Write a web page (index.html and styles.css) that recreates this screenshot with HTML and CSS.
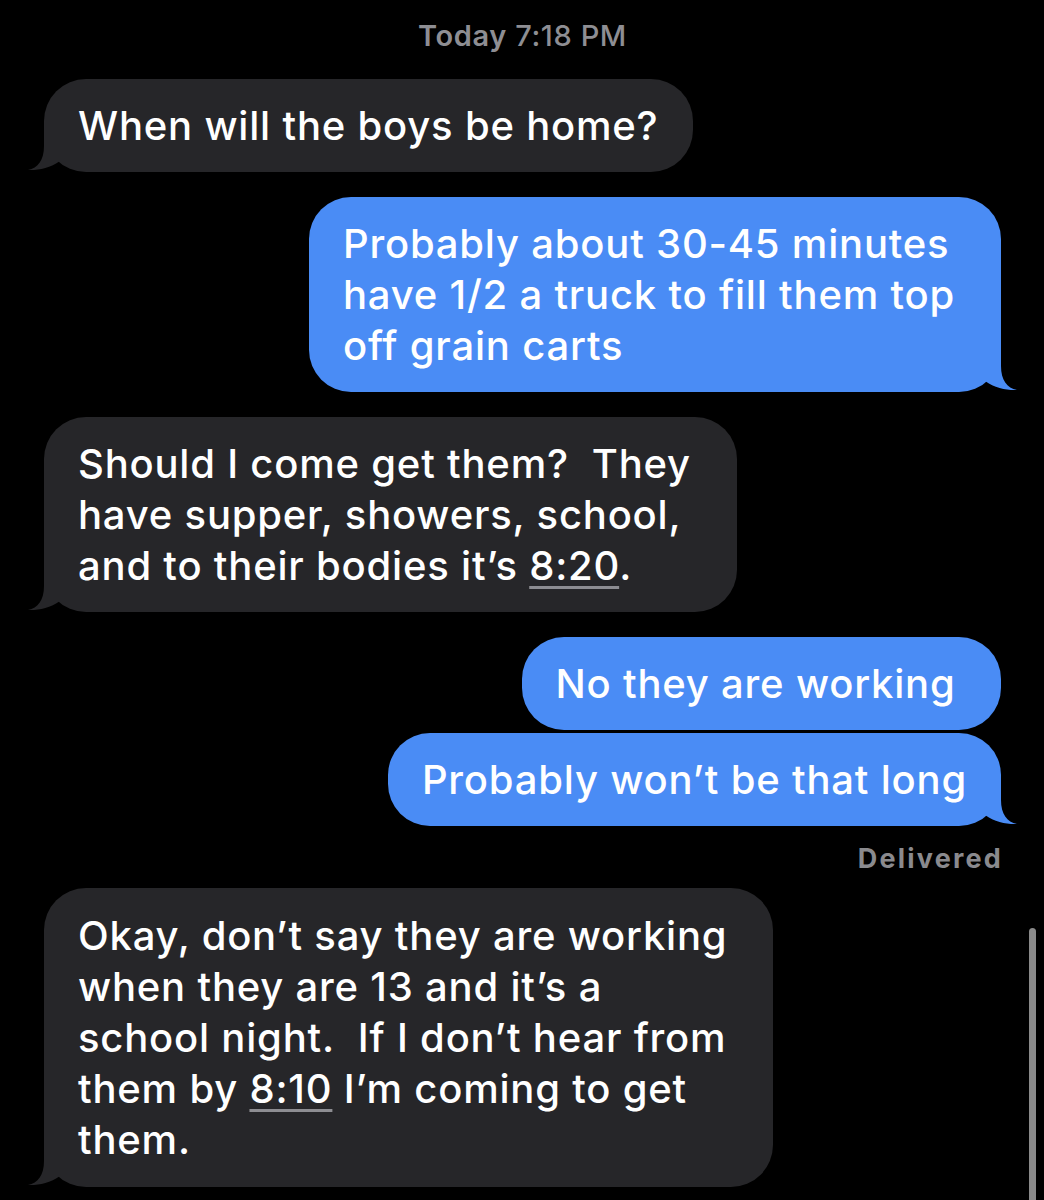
FILE: index.html
```
<!DOCTYPE html>
<html lang="en">

<head>
    <meta charset="UTF-8">
    <meta name="viewport" content="width=device-width, initial-scale=1.0">
    <title>Messages</title>
    <link rel="stylesheet" href="styles.css">
</head>

<body>
    <div class="thread">
        <div class="stamp"><b>Today</b> 7:18 PM</div>

        <div class="msg in">
            <div class="bubble">When will the boys be home?
                <svg class="tail" viewBox="0 0 40 50"><path d="M16 0 L16 24 C16 38 10 46 0 48 C10 48.5 22 46 32 39 L32 0 Z"/></svg>
            </div>
        </div>

        <div class="msg out">
            <div class="bubble multi">Probably about 30-45 minutes<br>have 1/2 a truck to fill them top<br>off grain carts
                <svg class="tail" viewBox="0 0 40 50"><path d="M16 0 L16 24 C16 38 10 46 0 48 C10 48.5 22 46 32 39 L32 0 Z"/></svg>
            </div>
        </div>

        <div class="msg in">
            <div class="bubble multi">Should I come get them?&nbsp; They<br>have supper, showers, school,<br>and to their bodies it’s <u>8:20</u>.
                <svg class="tail" viewBox="0 0 40 50"><path d="M16 0 L16 24 C16 38 10 46 0 48 C10 48.5 22 46 32 39 L32 0 Z"/></svg>
            </div>
        </div>

        <div class="msg out">
            <div class="bubble">No they are working&nbsp;</div>
        </div>
        <div class="msg out cont">
            <div class="bubble">Probably won’t be that long
                <svg class="tail" viewBox="0 0 40 50"><path d="M16 0 L16 24 C16 38 10 46 0 48 C10 48.5 22 46 32 39 L32 0 Z"/></svg>
            </div>
        </div>
        <div class="status">Delivered</div>

        <div class="msg in last">
            <div class="bubble multi">Okay, don’t say they are working<br>when they are 13 and it’s a<br>school night.&nbsp; If I don’t hear from<br>them by <u>8:10</u> I’m coming to get<br>them.
                <svg class="tail" viewBox="0 0 40 50"><path d="M16 0 L16 24 C16 38 10 46 0 48 C10 48.5 22 46 32 39 L32 0 Z"/></svg>
            </div>
        </div>
    </div>

    <div class="scrollbar"></div>
</body>

</html>
```
FILE: styles.css
```
html, body {
    margin: 0;
    height: 1200px;
    overflow: hidden;
    background: #000;
}

body {
    position: relative;
    font-family: Inter, "Noto Sans", sans-serif;
    color: #fff;
}

.thread {
    padding: 19px 43px 0 44px;
}

.stamp {
    text-align: center;
    font-size: 29px;
    line-height: 34px;
    font-weight: 500;
    letter-spacing: 0.6px;
    color: #8e8e93;
    margin-bottom: 26px;
}

.stamp b {
    font-weight: 600;
}

.msg {
    display: flex;
    margin-top: 25px;
}

.msg:nth-child(2) {
    margin-top: 0;
}

.msg.cont {
    margin-top: 3px;
}

.msg.out {
    justify-content: flex-end;
}

.bubble {
    position: relative;
    z-index: 0;
    padding: 21px 34px;
    border-radius: 42px;
    font-size: 40px;
    font-weight: 500;
    line-height: 51px;
    letter-spacing: 0.8px;
    white-space: nowrap;
}

/* wrapped messages keep a wider gutter on the right */
.bubble.multi {
    padding-right: 46px;
}

.msg.in .bubble {
    background: #262629;
}

.msg.out .bubble {
    background: #4a8cf5;
}

.msg.last .bubble {
    padding-top: 22px;
    padding-bottom: 22px;
}

.bubble u {
    text-decoration-color: #8d8d92;
    text-decoration-thickness: 3px;
    text-underline-offset: 6px;
}

/* little hook under the corner of the last bubble in a group */
.tail {
    position: absolute;
    z-index: -1;
    bottom: 0;
    width: 40px;
    height: 50px;
}

.msg.in .tail {
    left: -16px;
    fill: #262629;
}

.msg.out .tail {
    right: -16px;
    fill: #4a8cf5;
    transform: scaleX(-1);
}

.status {
    text-align: right;
    font-size: 27px;
    line-height: 32px;
    font-weight: 700;
    letter-spacing: 2.2px;
    color: #8a8a8e;
    margin: 17px -2px 13px 0;
}

.status + .msg {
    margin-top: 0;
}

.scrollbar {
    position: absolute;
    top: 928px;
    right: 8px;
    width: 7px;
    height: 300px;
    border-radius: 4px;
    background: #8a8a8a;
}
```
